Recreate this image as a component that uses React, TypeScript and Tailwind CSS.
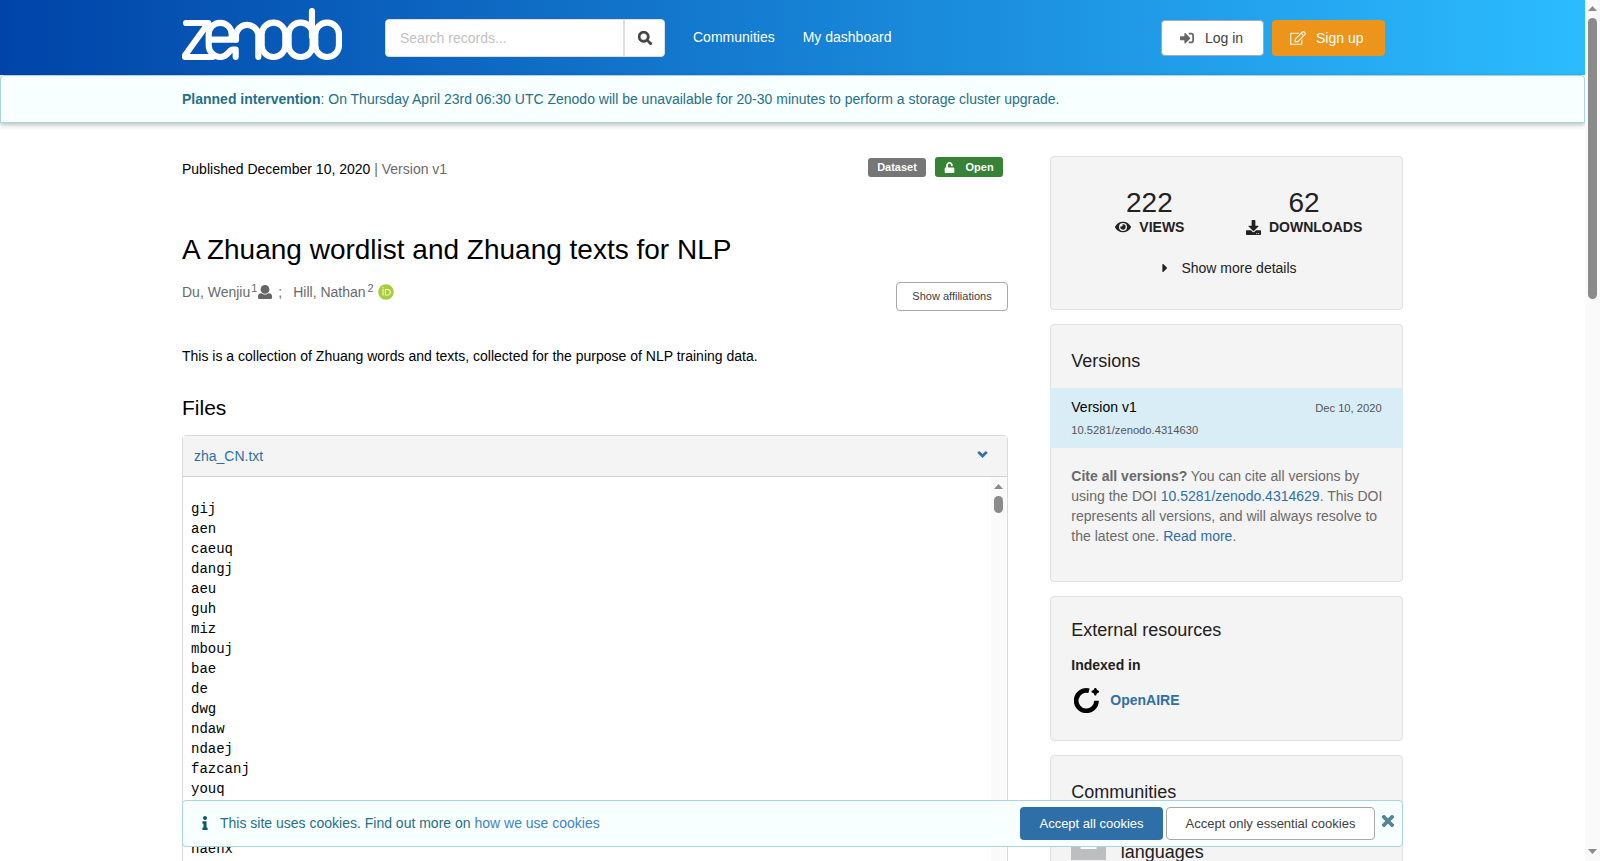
import {
  FaAngleDown,
  FaCaretRight,
  FaDownload,
  FaEye,
  FaInfo,
  FaOrcid,
  FaRegEdit,
  FaSearch,
  FaSignInAlt,
  FaUnlock,
} from 'react-icons/fa';

const words = [
  'gij', 'aen', 'caeuq', 'dangj', 'aeu', 'guh', 'miz', 'mbouj', 'bae', 'de',
  'dwg', 'ndaw', 'ndaej', 'fazcanj', 'youq', 'gou', 'mwngz', 'haenx',
];

function Logo() {
  return (
    <svg
      viewBox="18 24 480 157"
      className="h-[52.3px] w-40"
      fill="none"
      stroke="white"
      strokeWidth="18.5"
      strokeLinecap="round"
      strokeLinejoin="round"
    >
      <path d="M30 69H97L27 166V171H110" />
      <path d="M98 119H180M167 119V103a34.5 34.5 0 0 0-69 0V136a35 35 0 0 0 35 35C156 171 158 149 170 149H179V171" />
      <path d="M180 118V103a34 34 0 0 1 67 0V171" />
      <rect x="257" y="68" width="71" height="103" rx="35" />
      <rect x="338" y="68" width="72" height="103" rx="35" />
      <path d="M408 33V110" />
      <rect x="418" y="68" width="71" height="103" rx="35" />
    </svg>
  );
}

function PersonIcon() {
  return (
    <svg viewBox="0 0 14 14" className="mr-1.5 ml-px h-[14px] w-[14px] fill-[#666]">
      <circle cx="7" cy="4.4" r="4.4" />
      <path d="M0 12.8V11.2C0 9.4 1.2 8.2 3 8.2H3.6C4.600 9.100 5.800 9.500 7 9.500S9.400 9.100 10.400 8.200H11C12.800 8.200 14 9.400 14 11.200V12.800Q14 14 12.800 14H1.200Q0 14 0 12.800Z" />
    </svg>
  );
}

function Header() {
  return (
    <header className="flex h-[75px] shrink-0 bg-linear-to-r/srgb from-[#0044a8] to-[#2cbcff] pl-[182px] text-white">
      <div className="w-[203px] pt-2">
        <Logo />
      </div>
      <div className="mt-[19px] flex h-[38px] w-[280px] overflow-hidden rounded border border-[#dededf] bg-white">
        <div className="w-[237px] pl-[14px] leading-[36px] text-[#c2c2c2]">Search records...</div>
        <div className="flex flex-1 items-center justify-center border-l-2 border-[#dededf] text-[#444]">
          <FaSearch size={14} stroke="currentColor" strokeWidth={20} />
        </div>
      </div>
      <nav className="mt-[27px] ml-7 flex h-5 flex-1 gap-7">
        <a>Communities</a>
        <a>My dashboard</a>
      </nav>
      <div className="mt-5 mr-50 flex gap-2">
        <button className="flex h-9 w-[103px] items-center rounded border border-[#a9a9a9] bg-white pl-[18px] text-[#404040]">
          <FaSignInAlt size={14} className="mr-[11px] text-[#666]" />
          Log in
        </button>
        <button className="flex h-9 w-[113px] items-center rounded bg-[#ec951a] pl-[18px]">
          <FaRegEdit size={16} className="mr-[10px] opacity-80" />
          Sign up
        </button>
      </div>
    </header>
  );
}

function Record() {
  return (
    <main className="w-[826px] shrink-0">
      <div className="flex h-[60px] justify-between">
        <div className="pt-1.5 text-black">
          Published December 10, 2020 <span className="text-[#6a6a6a]">| Version v1</span>
        </div>
        <div className="mr-[5px] flex gap-[9px] pt-1 text-[11px] leading-[19px] font-bold text-white">
          <span className="mt-px h-[19px] w-[58px] rounded-[3px] bg-[#767676] text-center">Dataset</span>
          <span className="flex h-5 w-[68px] items-center rounded-[3px] bg-[#388237] pl-[9px]">
            <FaUnlock size={11} className="mr-[10.5px]" />
            Open
          </span>
        </div>
      </div>
      <h1 className="mt-[19px] text-[28px] leading-9 text-black">A Zhuang wordlist and Zhuang texts for NLP</h1>
      <div className="mt-[14px] flex h-[29px] justify-between text-[#6a6a6a]">
        <div className="flex h-5 items-center">
          Du, Wenjiu
          <span className="-mt-[8px] ml-px text-[11px]">1</span>
          <PersonIcon />
          ;
          <span className="ml-[11px]">Hill, Nathan</span>
          <span className="-mt-[8px] ml-[2px] text-[11px]">2</span>
          <FaOrcid size={16} className="ml-1 text-[#a6ce39]" />
        </div>
        <button className="h-[29px] w-28 rounded border border-[#a9a9a9] bg-white pb-0.5 text-[11px] text-[#404040]">
          Show affiliations
        </button>
      </div>
      <p className="mt-[35px] text-black">
        This is a collection of Zhuang words and texts, collected for the purpose of NLP training data.
      </p>
      <h2 className="mt-[28px] text-[21px] leading-[27px] text-black">Files</h2>
      <section className="mt-[14px] h-[500px] rounded-t border border-[#d9dadb]">
        <div className="flex h-[41px] justify-between border-b border-[#d0d1d2] bg-[#f4f4f4] pt-[10px] pr-[17px] pl-[11px] text-[#2f6fa7]">
          <a>zha_CN.txt</a>
          <FaAngleDown size={15} className="mt-px" stroke="currentColor" strokeWidth={20} />
        </div>
        <div className="flex h-[457px] justify-between">
          <pre className="pt-[22px] pl-2 font-['Liberation_Mono',monospace] text-sm leading-5 text-black">
            {words.join('\n')}
          </pre>
          <div className="mr-px flex w-[15px] flex-col items-center bg-[#fafafa] pt-[7px]">
            <svg width="9" height="5" className="fill-[#8b8b8b]">
              <path d="M0 5 4.5 0 9 5Z" />
            </svg>
            <div className="mt-[7px] h-[17px] w-[9px] rounded-full bg-[#8b8b8b]" />
          </div>
        </div>
      </section>
    </main>
  );
}

function Sidebar() {
  const card = 'rounded border border-[#e0e1e2] bg-[#f4f4f4] px-[20.3px]';
  return (
    <aside className="flex w-[353px] shrink-0 flex-col gap-[14px] text-[#212121]">
      <section className={`${card} h-[154px] pt-[30px]`}>
        <div className="grid grid-cols-2 text-center">
          <div className="pl-px text-[28px] leading-8">222</div>
          <div className="text-[28px] leading-8">62</div>
          <div className="-mt-0.5 flex items-center justify-center gap-2 pl-0.5 font-bold">
            <FaEye size={16} /> VIEWS
          </div>
          <div className="-mt-0.5 flex items-center justify-center gap-2 font-bold">
            <FaDownload size={15} /> DOWNLOADS
          </div>
        </div>
        <div className="mt-[21px] flex items-center justify-center">
          <FaCaretRight size={14} className="mr-[9px] ml-0.5" />
          Show more details
        </div>
      </section>

      <section className={`${card} h-[258px] pt-6`}>
        <h3 className="text-[18px] leading-6">Versions</h3>
        <div className="-mx-[21.3px] mt-[15px] h-[60px] bg-[#d9edf7] px-[21.3px] pt-[9px] text-[11.2px] text-[#555]">
          <div className="flex items-baseline justify-between">
            <span className="text-sm text-black">Version v1</span>
            <span>Dec 10, 2020</span>
          </div>
          <div className="mt-0.5 leading-5">10.5281/zenodo.4314630</div>
        </div>
        <p className="mt-[18px] -mr-2 text-[#6a6a6a]">
          <b>Cite all versions?</b> You can cite all versions by using the DOI{' '}
          <a className="text-[#2f6fa7]">10.5281/zenodo.4314629</a>. This DOI represents all versions, and will always
          resolve to the latest one. <a className="text-[#2f6fa7]">Read more</a>.
        </p>
      </section>

      <section className={`${card} h-[145px] pt-[21px]`}>
        <h3 className="text-[18px] leading-6">External resources</h3>
        <div className="mt-[13px] font-bold">Indexed in</div>
        <div className="mt-[12px] flex items-center">
          <svg viewBox="0 0 75 75" className="mt-px mr-[11px] ml-[3px] h-[25px] w-[25px]">
            <path d="M45 8.5A30.5 30.5 0 1 0 67.5 38" fill="none" stroke="black" strokeWidth="14" />
            <path d="M64 0Q66 9 75 11Q66 13 64 22Q62 13 53 11Q62 9 64 0Z" stroke="black" strokeWidth="4" />
          </svg>
          <a className="font-bold text-[#2f6fa7]">OpenAIRE</a>
        </div>
      </section>

      <section className={`${card} h-[180px] pt-6`}>
        <h3 className="text-[18px] leading-6">Communities</h3>
        <div className="mt-[21px] flex">
          <svg viewBox="0 0 35 35" className="h-[35px] w-[35px]">
            <path fill="#bcbebf" d="M0 0H35V35H0Z" />
            <path fill="white" d="M9.5 12H25.5V24H9.5Z" />
          </svg>
          <span className="mt-[15px] ml-[14.5px] text-[18px] leading-6">languages</span>
        </div>
      </section>
    </aside>
  );
}

function CookieBar() {
  return (
    <div className="absolute top-[800px] left-[182px] flex h-[47px] w-[1221px] rounded border border-[#a9d5de] bg-[#f8ffff] pt-1.5 text-[#276f86]">
      <FaInfo size={14} className="mt-[9px] ml-[14.5px] text-[#0e566c]" />
      <div className="mt-1.5 ml-[8.5px] flex-1">
        This site uses cookies. Find out more on <a className="text-[#4183c4]">how we use cookies</a>
      </div>
      <button className="h-[33px] w-[143px] rounded bg-[#2f6fa7] text-[13px] text-white">Accept all cookies</button>
      <button className="ml-[3px] h-[33px] w-[209px] rounded border border-[#a9a9a9] bg-white text-[13px] text-[#404040]">
        Accept only essential cookies
      </button>
      <svg viewBox="0 0 12 12" className="mt-[7.5px] mr-[8px] ml-[7px] h-[12px] w-[12px]">
        <path d="M2 2 10 10M10 2 2 10" stroke="#528795" strokeWidth="3.8" strokeLinecap="square" />
      </svg>
    </div>
  );
}

export default function App() {
  return (
    <div className="relative flex h-[861px] w-[1600px] overflow-hidden bg-white font-['Liberation_Sans',Arial,sans-serif] text-sm leading-5">
      <div className="flex w-[1585px] flex-col">
        <Header />
        <div className="h-12 shrink-0 rounded-t border border-[#a9d5de] bg-[#f8ffff] pt-[13px] pl-[181px] text-[#276f86] shadow-[0_2px_5px_rgba(34,36,38,0.3)]">
          <b>Planned intervention</b>: On Thursday April 23rd 06:30 UTC Zenodo will be unavailable for 20-30 minutes to
          perform a storage cluster upgrade.
        </div>
        <div className="flex gap-[42px] pl-[182px]">
          <div className="pt-[30px]">
            <Record />
          </div>
          <div className="pt-[33px]">
            <Sidebar />
          </div>
        </div>
      </div>
      <div className="flex w-[15px] flex-col items-center bg-[#fafafa] pt-1.5 pb-[7px]">
        <svg width="9" height="5" className="fill-[#8b8b8b]">
          <path d="M0 5 4.5 0 9 5Z" />
        </svg>
        <div className="mt-[7px] h-[281px] w-[9px] rounded-full bg-[#8b8b8b]" />
        <svg width="9" height="5" className="mt-auto fill-[#8b8b8b]">
          <path d="M0 0 4.5 5 9 0Z" />
        </svg>
      </div>
      <CookieBar />
    </div>
  );
}
